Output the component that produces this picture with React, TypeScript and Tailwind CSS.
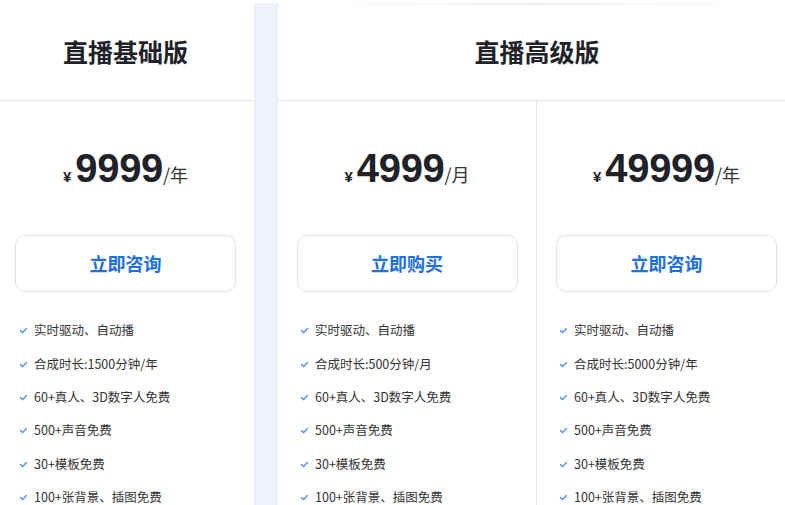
const cjk = { fontFamily: '"Noto Sans CJK SC", "Noto Sans", sans-serif' };
const latin = { fontFamily: '"Liberation Sans", "Noto Sans CJK SC", sans-serif' };

interface Plan {
  price: string;
  unit: string;
  action: string;
  minutes: string;
}

const features = (minutes: string) => [
  "实时驱动、自动播",
  `合成时长:${minutes}`,
  "60+真人、3D数字人免费",
  "500+声音免费",
  "30+模板免费",
  "100+张背景、插图免费",
];

function Check() {
  return (
    <svg width="9" height="9" viewBox="0 0 9 9" className="shrink-0">
      <path d="M1.6 4.6 L3.7 6.6 L7.4 2.6" fill="none" stroke="#5d97ef" strokeWidth="1.5" strokeLinecap="round" strokeLinejoin="round" />
    </svg>
  );
}

function PlanColumn({ plan, className = "" }: { plan: Plan; className?: string }) {
  return (
    <div className={`flex flex-col ${className}`}>
      <div className="flex h-[134px] items-center justify-center">
        <div className="flex items-baseline text-[#1f2329]" style={latin}>
          <span className="mr-[4px] text-[15px] font-bold">¥</span>
          <span className="text-[40px] font-bold leading-none tracking-[-0.3px]">{plan.price}</span>
          <span className="text-[18px] text-[#333]" style={cjk}>/{plan.unit}</span>
        </div>
      </div>
      <button
        className="mx-auto flex h-[57px] w-[221px] items-center justify-center rounded-[10px] border border-[#e2e4e9] bg-white text-[18px] font-bold text-[#1e6fe3]"
        style={cjk}
      >
        {plan.action}
      </button>
      <ul className="mt-[22px] pl-[22px]" style={cjk}>
        {features(plan.minutes).map((f) => (
          <li key={f} className="flex h-[33.4px] items-center gap-[5px] text-[12.5px] text-[#333]">
            <Check />
            <span className="ml-[1px]">{f}</span>
          </li>
        ))}
      </ul>
    </div>
  );
}

export default function App() {
  return (
    <div className="h-[505px] w-[785px] overflow-hidden bg-white pt-[3px]" style={cjk}>
      <div className="flex h-full w-[800px] bg-[#eff3fc]">
        {/* 基础版 */}
        <div className="-ml-[3px] w-[257px] shrink-0 bg-white shadow-[1px_0_2px_rgba(0,0,0,0.04)]">
          <div className="flex h-[98px] items-center justify-center border-b border-[#e4e6eb]">
            <h2 className="text-[25px] font-bold text-[#1f2329]">直播基础版</h2>
          </div>
          <PlanColumn plan={{ price: "9999", unit: "年", action: "立即咨询", minutes: "1500分钟/年" }} />
        </div>

        {/* 高级版 */}
        <div className="ml-[24px] w-[518px] shrink-0 bg-white shadow-[-1px_0_2px_rgba(0,0,0,0.04)]">
          <div className="relative flex h-[98px] items-center justify-center border-b border-[#e4e6eb]">
            <div className="absolute left-[52px] right-[54px] top-0 h-[2px] bg-gradient-to-r from-transparent via-[#eceef2] to-transparent" />
            <h2 className="text-[25px] font-bold text-[#1f2329]">直播高级版</h2>
          </div>
          <div className="flex">
            <PlanColumn
              className="w-[259px] border-r border-[#e4e6eb]"
              plan={{ price: "4999", unit: "月", action: "立即购买", minutes: "500分钟/月" }}
            />
            <PlanColumn
              className="w-[259px]"
              plan={{ price: "49999", unit: "年", action: "立即咨询", minutes: "5000分钟/年" }}
            />
          </div>
        </div>
      </div>
    </div>
  );
}
